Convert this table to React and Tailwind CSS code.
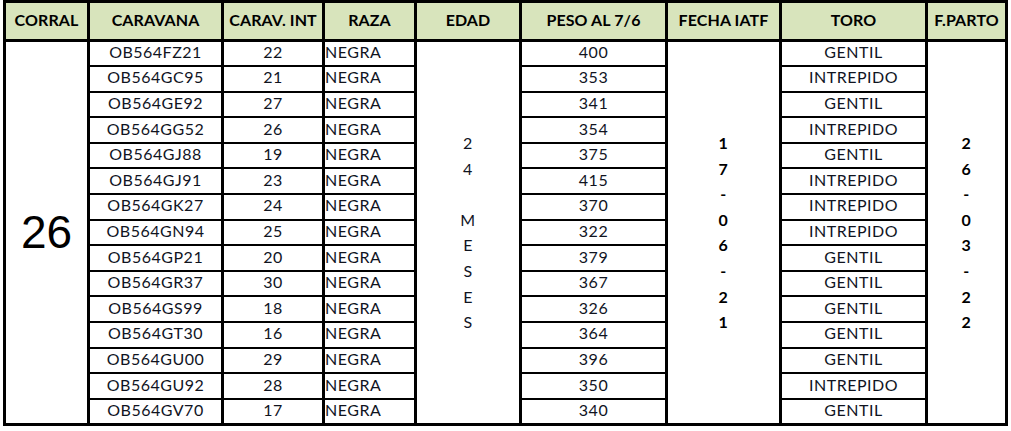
import React from 'react'

const rows = [
  ['OB564FZ21', '22', 'NEGRA', '400', 'GENTIL'],
  ['OB564GC95', '21', 'NEGRA', '353', 'INTREPIDO'],
  ['OB564GE92', '27', 'NEGRA', '341', 'GENTIL'],
  ['OB564GG52', '26', 'NEGRA', '354', 'INTREPIDO'],
  ['OB564GJ88', '19', 'NEGRA', '375', 'GENTIL'],
  ['OB564GJ91', '23', 'NEGRA', '415', 'INTREPIDO'],
  ['OB564GK27', '24', 'NEGRA', '370', 'INTREPIDO'],
  ['OB564GN94', '25', 'NEGRA', '322', 'INTREPIDO'],
  ['OB564GP21', '20', 'NEGRA', '379', 'GENTIL'],
  ['OB564GR37', '30', 'NEGRA', '367', 'GENTIL'],
  ['OB564GS99', '18', 'NEGRA', '326', 'GENTIL'],
  ['OB564GT30', '16', 'NEGRA', '364', 'GENTIL'],
  ['OB564GU00', '29', 'NEGRA', '396', 'GENTIL'],
  ['OB564GU92', '28', 'NEGRA', '350', 'INTREPIDO'],
  ['OB564GV70', '17', 'NEGRA', '340', 'GENTIL'],
]

const headers = ['CORRAL', 'CARAVANA', 'CARAV. INT', 'RAZA', 'EDAD', 'PESO AL 7/6', 'FECHA IATF', 'TORO', 'F.PARTO']
const widths = [84, 134, 101, 92, 105, 146, 114, 146, 80]

function Stack({ chars, bold }) {
  return (
    <div className={`flex flex-col items-center leading-[25.6px] ${bold ? 'font-bold' : ''}`}>
      {chars.map((c, i) => (
        <span key={i} className="h-[25.6px]">{c || '\u00a0'}</span>
      ))}
    </div>
  )
}

export default function App() {
  return (
    <div className="h-[431px] w-[1011px] bg-white pl-[3px] text-[#10141f]" style={{ fontFamily: 'Lato, "Open Sans", sans-serif' }}>
      <table className="w-[1002px] table-fixed border-collapse border-[3px] border-black">
        <colgroup>
          {widths.map((w, i) => (
            <col key={i} style={{ width: w }} />
          ))}
        </colgroup>
        <thead>
          <tr className="h-[39px] bg-[#d8e4bc]">
            {headers.map((h) => (
              <th key={h} className="border-[3px] border-black px-0 pt-0 pb-[2px] text-center text-[16px] font-bold tracking-[0.1px] text-black">
                {h}
              </th>
            ))}
          </tr>
        </thead>
        <tbody className="text-[16px] tracking-[0.5px]">
          {rows.map((r, i) => (
            <tr key={r[0]} className="h-[25.6px]">
              {i === 0 && (
                <td rowSpan={15} className="border-[3px] border-black p-0 text-center align-middle text-[46px] tracking-normal text-black" style={{ fontFamily: '"Liberation Sans", Arial, sans-serif' }}>
                  26
                </td>
              )}
              <td className="border-x-[3px] border-y-2 border-black px-0 pt-0 pb-[3px] text-center leading-none">{r[0]}</td>
              <td className="border-x-[3px] border-y-2 border-black px-0 pt-0 pb-[3px] text-center leading-none">{r[1]}</td>
              <td className="border-x-[3px] border-y-2 border-black px-0 pt-0 pb-[3px] text-left leading-none">{r[2]}</td>
              {i === 0 && (
                <td rowSpan={15} className="border-[3px] border-black p-0 align-middle">
                  <Stack chars={['2', '4', '', 'M', 'E', 'S', 'E', 'S']} />
                </td>
              )}
              <td className="border-x-[3px] border-y-2 border-black px-0 pt-0 pb-[3px] text-center leading-none">{r[3]}</td>
              {i === 0 && (
                <td rowSpan={15} className="border-[3px] border-black p-0 align-middle text-black">
                  <Stack chars={['1', '7', '-', '0', '6', '-', '2', '1']} bold />
                </td>
              )}
              <td className="border-x-[3px] border-y-2 border-black px-0 pt-0 pb-[3px] text-center leading-none">{r[4]}</td>
              {i === 0 && (
                <td rowSpan={15} className="border-[3px] border-black p-0 align-middle text-black">
                  <Stack chars={['2', '6', '-', '0', '3', '-', '2', '2']} bold />
                </td>
              )}
            </tr>
          ))}
        </tbody>
      </table>
    </div>
  )
}
